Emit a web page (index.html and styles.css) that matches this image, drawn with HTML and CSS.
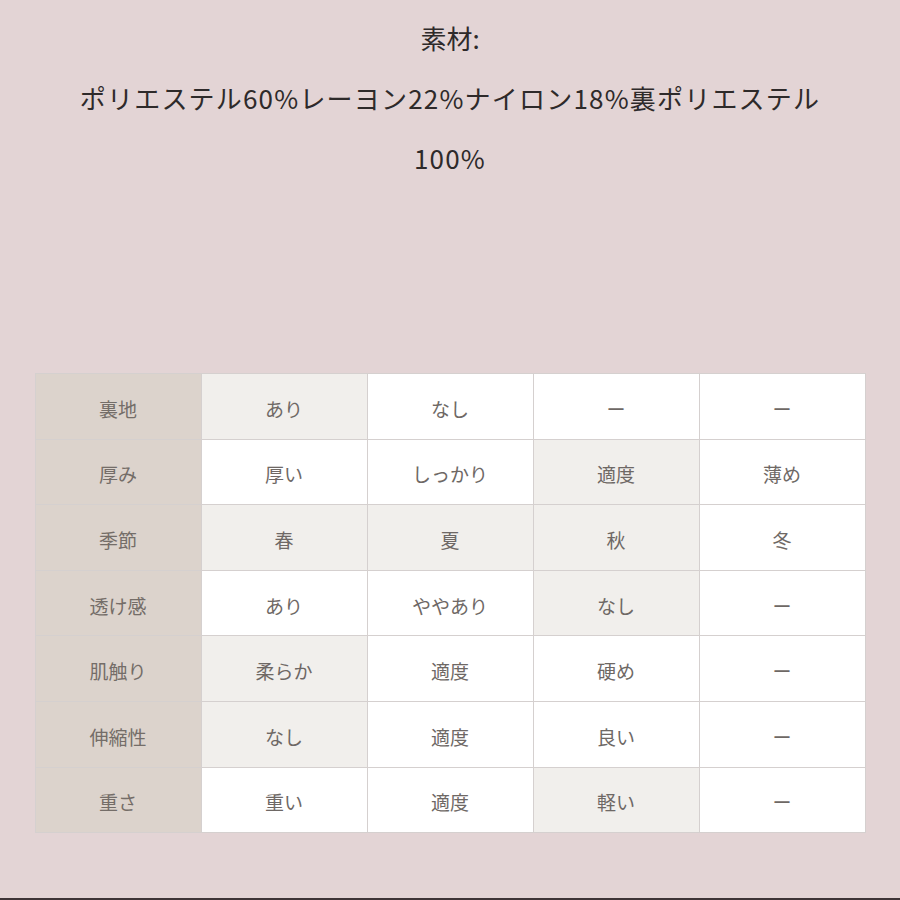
FILE: index.html
```html
<!DOCTYPE html>
<html lang="ja">
<head>
<meta charset="utf-8">
<link rel="stylesheet" href="styles.css">
</head>
<body>
<div class="page">
  <div class="material">
    <p class="line">素材:</p>
    <p class="line wrap">ポリエステル60%レーヨン22%ナイロン18%裏ポリエステル100%</p>
  </div>
  <table class="spec">
    <tr><th>裏地</th><td class="on">あり</td><td>なし</td><td>ー</td><td>ー</td></tr>
    <tr><th>厚み</th><td>厚い</td><td>しっかり</td><td class="on">適度</td><td>薄め</td></tr>
    <tr><th>季節</th><td class="on">春</td><td class="on">夏</td><td class="on">秋</td><td>冬</td></tr>
    <tr><th>透け感</th><td>あり</td><td>ややあり</td><td class="on">なし</td><td>ー</td></tr>
    <tr><th>肌触り</th><td class="on">柔らか</td><td>適度</td><td>硬め</td><td>ー</td></tr>
    <tr><th>伸縮性</th><td class="on">なし</td><td>適度</td><td>良い</td><td>ー</td></tr>
    <tr><th>重さ</th><td>重い</td><td>適度</td><td class="on">軽い</td><td>ー</td></tr>
  </table>
  <div class="bottom-bar"></div>
</div>
</body>
</html>
```
FILE: styles.css
```css
html, body {
  margin: 0;
  padding: 0;
}
body {
  background: #e3d4d5;
  font-family: "Noto Sans CJK JP", "Noto Sans", sans-serif;
}
.page {
  height: 900px;
  display: flex;
  flex-direction: column;
  align-items: center;
}
.material {
  padding-top: 8px;
  width: 790px;
  text-align: center;
  color: #2e2a2a;
  font-size: 26px;
}
.line {
  margin: 0;
  line-height: 60px;
}
.wrap {
  letter-spacing: 1.2px;
}
.spec {
  margin-top: 185px;
  border-collapse: collapse;
  width: 831px;
  table-layout: fixed;
  font-size: 19px;
  color: #6e6865;
}
.spec th, .spec td {
  border: 1px solid #d5d0cf;
  height: 60.6px;
  padding: 4px 0 0 0;
  text-align: center;
  font-weight: normal;
  background: #ffffff;
}
.spec th {
  background: #dcd3cc;
  color: #746d68;
}
.spec td.on {
  background: #f1efec;
}
.bottom-bar {
  margin-top: auto;
  align-self: stretch;
  height: 2px;
  background: #3e3436;
}
```
